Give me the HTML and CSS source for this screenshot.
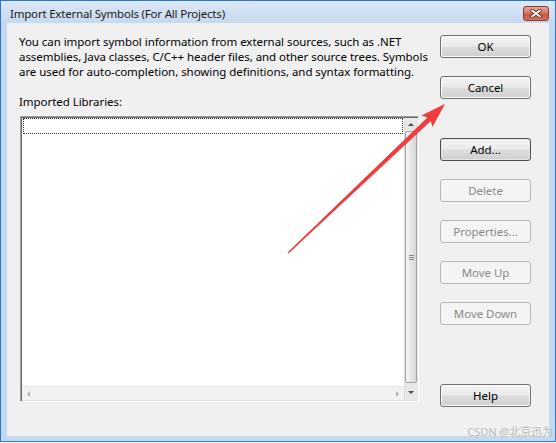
FILE: index.html
```html
<!DOCTYPE html>
<html lang="en">
<head>
    <meta charset="UTF-8">
    <title>Import External Symbols</title>
    <link rel="stylesheet" href="styles.css">
</head>
<body>
    <div class="window">
        <div class="titlebar">
            <span class="title">Import External Symbols (For All Projects)</span>
            <span class="close">
                <svg width="12" height="9" viewBox="0 0 12 9">
                    <path d="M2 1.5 L10 7.5 M10 1.5 L2 7.5" stroke="#6b2a20" stroke-width="3.6" stroke-linecap="round"/>
                    <path d="M2 1.5 L10 7.5 M10 1.5 L2 7.5" stroke="#fff" stroke-width="2" stroke-linecap="round"/>
                </svg>
            </span>
        </div>
        <div class="client">
            <div class="main">
                <p class="intro">You can import symbol information from external sources, such as .NET<br>assemblies, Java classes, C/C++ header files, and other source trees. Symbols<br>are used for auto-completion, showing definitions, and syntax formatting.</p>
                <div class="label">Imported Libraries:</div>
                <div class="listbox">
                    <div class="list-area">
                        <div class="items">
                            <div class="focus-row"></div>
                        </div>
                        <div class="hscroll">
                            <span class="tri tri-left"></span>
                            <span class="tri tri-right"></span>
                        </div>
                    </div>
                    <div class="vscroll">
                        <div class="sb-btn"><span class="tri tri-up"></span></div>
                        <div class="thumb"><span class="grip"></span></div>
                        <div class="sb-btn sb-down"><span class="tri tri-down"></span></div>
                    </div>
                </div>
            </div>
            <div class="buttons">
                <div class="btn">OK</div>
                <div class="btn">Cancel</div>
                <div class="btn btn-default group">Add...</div>
                <div class="btn disabled">Delete</div>
                <div class="btn disabled">Properties...</div>
                <div class="btn disabled">Move Up</div>
                <div class="btn disabled">Move Down</div>
                <div class="btn help">Help</div>
            </div>
        </div>
        <div class="watermark">CSDN @北京迅为</div>
        <!-- red annotation arrow drawn over the dialog -->
        <svg class="pointer" width="556" height="442" viewBox="0 0 556 442">
            <polygon fill="#f03c3c" points="287.5,252.5 427.4,117.4 421.4,115.5 445,104 432.4,127.1 430.8,121.0 288.5,253.5"/>
        </svg>
    </div>
</body>
</html>
```

FILE: styles.css
```css
*{
    margin: 0;
    padding: 0;
    box-sizing: border-box;
}
body{
    background: #fff;
    font-family: "Noto Sans", "Open Sans", "Noto Sans CJK SC", sans-serif;
    font-size: 11.5px;
    letter-spacing: -0.05px;
    color: #000;
}

.window{
    position: relative;
    width: 556px;
    height: 442px;
    border: 1px solid #2a78d0;
    background: #c4d8ef;
    display: flex;
    flex-direction: column;
}
.titlebar{
    height: 22px;
    display: flex;
    justify-content: space-between;
    align-items: flex-start;
    padding: 0 6px 0 9px;
    background: linear-gradient(#dce8f6, #c6d9ef);
}
.title{
    padding-top: 3px;
    line-height: 20px;
    letter-spacing: -0.2px;
    color: #1c1c1c;
}
.close{
    margin-top: 5px;
    width: 26px;
    height: 15px;
    border: 1px solid #8a3a2e;
    border-radius: 3px;
    background: linear-gradient(#e8a698 0%, #d77a68 45%, #c9583f 55%, #d27360 100%);
    display: flex;
    align-items: center;
    justify-content: center;
}
.close svg{
    display: block;
}

.client{
    margin: 0 6px;
    height: 413px;
    background: #f0f0f0;
    display: flex;
    padding: 0 18px 0 12px;
}
.main{
    width: 399px;
}
.intro{
    padding-top: 11px;
    line-height: 15px;
    white-space: nowrap;
}
.label{
    margin-top: 15px;
    line-height: 15px;
}
.listbox{
    margin: 7px 0 0 1px;
    width: 399px;
    height: 286px;
    border: 1px solid;
    border-color: #a0a0a0 #fff #fff #a0a0a0;
    box-shadow: inset 1px 1px #696969, inset -1px -1px #e3e3e3;
    padding: 1px 1px 1px 1px;
    display: flex;
    background: #fff;
}
.list-area{
    flex: 1;
    display: flex;
    flex-direction: column;
}
.items{
    flex: 1;
    background: #fff;
}
.focus-row{
    margin: 0 1px;
    height: 16px;
    border: 1px dotted #333;
}
.hscroll{
    height: 14px;
    background: #f2f2f2;
    border-top: 1px solid #e6e6e6;
    display: flex;
    justify-content: space-between;
    align-items: center;
    padding: 0 5px 0 5px;
}
.vscroll{
    width: 13px;
    background: #e8e8e8;
    border-left: 1px solid #dcdcdc;
    display: flex;
    flex-direction: column;
}
.sb-btn{
    height: 13px;
    display: flex;
    align-items: center;
    justify-content: center;
}
.sb-down{
    height: 16px;
}
.thumb{
    flex: 1;
    margin: 0 0 1px 0;
    border: 1px solid #a4a4a4;
    border-radius: 2px;
    background: linear-gradient(90deg, #f4f4f4, #e6e6e6 50%, #d6d6d6);
    display: flex;
    align-items: center;
    justify-content: center;
}
.grip{
    width: 5px;
    height: 5px;
    border-top: 1px solid #8a8a8a;
    border-bottom: 1px solid #8a8a8a;
    position: relative;
}
.grip::after{
    content: "";
    position: absolute;
    left: 0;
    right: 0;
    top: 1px;
    border-top: 1px solid #8a8a8a;
}
.tri{
    width: 0;
    height: 0;
    border-style: solid;
}
.tri-up{
    border-width: 0 3px 3px 3px;
    border-color: transparent transparent #4a4a4a transparent;
}
.tri-down{
    border-width: 3px 3px 0 3px;
    border-color: #4a4a4a transparent transparent transparent;
}
.tri-left{
    border-width: 3px 3px 3px 0;
    border-color: transparent #b0b0b0 transparent transparent;
}
.tri-right{
    border-width: 3px 0 3px 3px;
    border-color: transparent transparent transparent #b0b0b0;
}

.buttons{
    margin-left: 22px;
    width: 91px;
    padding-top: 12px;
    display: flex;
    flex-direction: column;
}
.btn{
    height: 23px;
    border: 1px solid #707070;
    border-radius: 3px;
    background: linear-gradient(#f2f2f2 0%, #ebebeb 48%, #dddddd 52%, #cfcfcf 100%);
    box-shadow: inset 0 0 0 1px #fbfbfb;
    text-align: center;
    line-height: 21px;
}
.btn + .btn{
    margin-top: 18px;
}
.btn + .group{
    margin-top: 39px;
}
.btn + .help{
    margin-top: 59px;
}
.btn-default{
    border-color: #4f4f4f;
    box-shadow: inset 0 0 0 1px #e6e6e6;
}
.disabled{
    border-color: #b5b9bc;
    background: #f4f4f4;
    box-shadow: none;
    color: #8a8a8a;
}

.watermark{
    position: absolute;
    right: 2px;
    bottom: 2px;
    font-size: 11px;
    color: #bcbcbc;
}
.pointer{
    position: absolute;
    left: -1px;
    top: -1px;
    pointer-events: none;
}
```
